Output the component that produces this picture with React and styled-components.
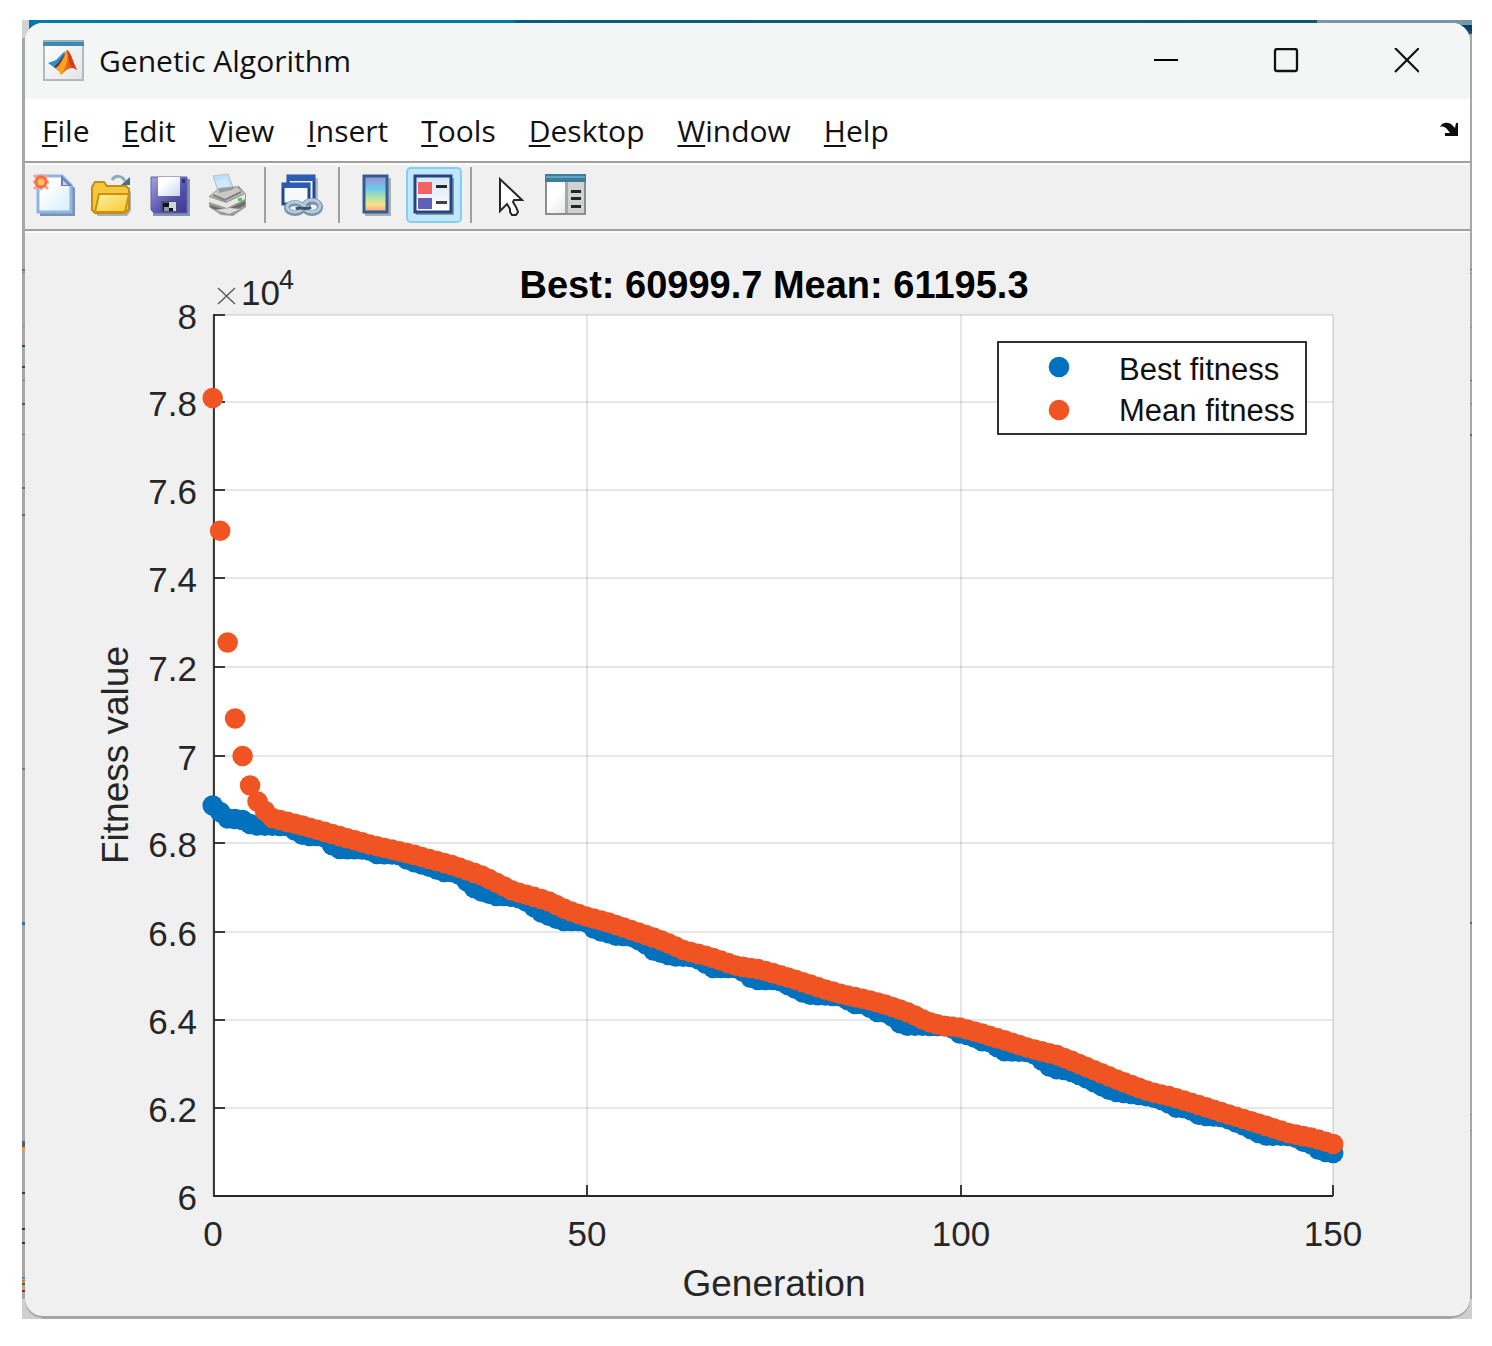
import React from 'react';
import styled, { createGlobalStyle } from 'styled-components';

const GlobalStyle = createGlobalStyle`
  * {
    box-sizing: border-box;
  }

  body {
    margin: 0;
    background-color: #ffffff;
  }
`;

// thin slices of whatever is open behind the window
const leftMarks = [
  [249, 2, '#6f7171'],
  [252, 1, '#8c8e8e'],
  [306, 1, '#8c8e8e'],
  [325, 2, '#3c4a4a'],
  [327, 1, '#7fb5b2'],
  [345, 1, '#7fb5b2'],
  [346, 2, '#3c4a4a'],
  [360, 1, '#7d7f7f'],
  [383, 2, '#555757'],
  [414, 1, '#777979'],
  [467, 2, '#666868'],
  [494, 2, '#666868'],
  [748, 2, '#777979'],
  [902, 3, '#1d78a8'],
  [1121, 3, '#3f66a0'],
  [1124, 3, '#6a5a50'],
  [1127, 4, '#e0976c'],
  [1172, 2, '#3c3c3c'],
  [1208, 2, '#2c2c60'],
  [1222, 2, '#2c2c60'],
  [1257, 2, '#5a88a8'],
  [1260, 2, '#d08020'],
  [1263, 2, '#2c6a6a'],
  [1266, 3, '#e0976c'],
  [1270, 2, '#803030'],
];

const rightMarks = [
  [249, 1, '#777979'],
  [253, 1, '#8c8e8e'],
  [307, 1, '#8c8e8e'],
  [360, 1, '#666868'],
  [383, 1, '#7d7f7f'],
  [414, 2, '#666868'],
  [522, 2, '#7fb5b2'],
  [902, 2, '#1d78a8'],
  [1094, 1, '#8c8e8e'],
  [1110, 1, '#8c8e8e'],
];

const stripe = (marks) => {
  const stops = marks.map(
    ([at, size, color]) =>
      `transparent ${at}px, ${color} ${at}px, ${color} ${at + size}px, transparent ${at + size}px`
  );
  return `linear-gradient(to bottom, ${stops.join(', ')})`;
};

const Page = styled.main`
  padding: 20px 20px 27px 22px;
  font-family: 'Open Sans', 'Noto Sans', sans-serif;
`;

const Backdrop = styled.div`
  padding: 3px 2px 3px 3px;
  background:
    ${stripe(leftMarks)} left top / 3px 100% no-repeat,
    ${stripe(rightMarks)} right top / 2px 100% no-repeat,
    linear-gradient(#d2d2d2, #d2d2d2) left top / 7px 18px no-repeat,
    linear-gradient(#78939f, #6f9db8) right top / 155px 5px no-repeat,
    linear-gradient(#0a3f6c, #0a3f6c) right top / 24px 11px no-repeat,
    linear-gradient(to right, #0077ae, #0077a6 34%, #075f80 34%, #14566e) left top / 100% 14px no-repeat,
    linear-gradient(#cfcfcf, #cfcfcf) left bottom / 20px 20px no-repeat,
    linear-gradient(#cfcfcf, #cfcfcf) right bottom / 20px 20px no-repeat,
    #a6a8a8;
`;

const Window = styled.section`
  overflow: hidden;
  border-radius: 18px;
  background-color: #f0f0f0;
  box-shadow: 0 2px 0 #a4a6a6;
`;

const TitleBar = styled.header`
  display: flex;
  align-items: center;
  height: 76px;
  padding: 0 4px 0 18px;
  background-color: #f4f6f6;
`;

const Title = styled.h1`
  flex: 1;
  margin: 0 0 0 14px;
  font-size: 30px;
  font-weight: 400;
  line-height: 40px;
  color: #111111;
`;

const WindowButton = styled.button`
  display: flex;
  align-items: center;
  justify-content: center;
  width: 120px;
  height: 74px;
  padding: 0;
  border: 0;
  background: none;
`;

const MenuBar = styled.nav`
  display: flex;
  align-items: center;
  height: 62px;
  padding: 2px 10px 0 17px;
  background-color: #ffffff;
`;

const MenuList = styled.ul`
  display: flex;
  flex: 1;
  gap: 33px;
  margin: 0;
  padding: 0;
  list-style: none;
`;

const MenuButton = styled.button`
  padding: 0;
  border: 0;
  background: none;
  font-family: inherit;
  font-size: 30px;
  line-height: 40px;
  color: #111111;

  &::first-letter {
    text-decoration: underline;
    text-decoration-thickness: 2px;
    text-underline-offset: 3px;
  }
`;

const DockButton = styled.button`
  display: flex;
  padding: 0 0 4px;
  border: 0;
  background: none;
`;

const ToolBar = styled.div`
  display: flex;
  align-items: center;
  gap: 2px;
  height: 70px;
  padding: 0 1px 2px;
  border-top: 2px solid #a0a0a0;
  border-bottom: 2px solid #a0a0a0;
  box-shadow: inset 0 2px 0 #fbfbfb;
`;

const ToolButton = styled.button`
  display: flex;
  align-items: center;
  justify-content: center;
  width: 56px;
  height: 56px;
  padding: 0;
  border: 2px solid ${(props) => (props.$active ? '#84cdf3' : 'transparent')};
  border-radius: 5px;
  background-color: ${(props) => (props.$active ? '#c2e6fa' : 'transparent')};
`;

const Separator = styled.span`
  width: 14px;
  height: 56px;
  background: linear-gradient(#a0a0a0, #a0a0a0) center / 2px 100% no-repeat;
`;

const Figure = styled.div`
  border-top: 2px solid #fbfbfb;
`;

const Chart = styled.svg`
  display: block;
  width: 100%;
  height: auto;
  font-family: 'Liberation Sans', Arial, sans-serif;
  fill: #262626;
`;

const TickText = styled.text`
  font-size: 35px;
`;

const ExponentText = styled.text`
  font-size: 27px;
`;

const LabelText = styled.text`
  font-size: 37px;
`;

const ChartTitle = styled.text`
  font-size: 38px;
  font-weight: 700;
  fill: #000000;
`;

const LegendText = styled.text`
  font-size: 31px;
  fill: #111111;
`;

const BLUE = '#0072bd';
const ORANGE = '#f05423';

const menus = ['File', 'Edit', 'View', 'Insert', 'Tools', 'Desktop', 'Window', 'Help'];

const xTicks = [
  { label: '0', x: 213 },
  { label: '50', x: 587 },
  { label: '100', x: 961 },
  { label: '150', x: 1333 },
];

const yTicks = [
  { label: '8', y: 315 },
  { label: '7.8', y: 402 },
  { label: '7.6', y: 490 },
  { label: '7.4', y: 578 },
  { label: '7.2', y: 667 },
  { label: '7', y: 756 },
  { label: '6.8', y: 843 },
  { label: '6.6', y: 932 },
  { label: '6.4', y: 1020 },
  { label: '6.2', y: 1108 },
  { label: '6', y: 1196 },
];

// [generation, y on the canvas], the generations between are interpolated
const meanKnots = [
  [0, 398], [1, 530.7], [2, 642.5], [3, 718.5], [4, 756], [5, 785.5], [6, 801.5],
  [7, 811], [8, 818], [9, 820], [11.7, 825], [16, 834], [21, 844.5], [26.8, 854.5],
  [32.2, 865.5], [36.2, 876], [40.2, 891], [44.7, 900.5], [47.4, 910], [50, 916.5],
  [53.2, 923], [57.2, 933], [60.3, 941], [63, 950], [66.6, 957], [70.2, 966],
  [73.3, 969.5], [77.7, 979], [82.2, 990], [84.4, 994.5], [87.5, 999.5], [90.2, 1005],
  [93.3, 1013], [95.6, 1021.5], [97.8, 1026], [100, 1027.5], [102.7, 1033],
  [106.3, 1041], [109.4, 1048.5], [113, 1055], [115.2, 1061.5], [117.9, 1070],
  [121.5, 1081], [125.5, 1092], [128.2, 1096.5], [132.2, 1105.5], [135.8, 1114],
  [139.8, 1123], [144.2, 1133.5], [147.3, 1138], [150, 1144],
];

const bestKnots = [
  [0, 805.5], [1, 812], [2, 818.5], [3, 819], [4, 820], [5, 824], [6, 825.5],
  [10, 826], [12.3, 836], [14.8, 836], [16.5, 849], [20.6, 849.5], [22, 854],
  [24.8, 854.5], [26.4, 861], [28.7, 866], [30.9, 872], [32.6, 872], [35.3, 890],
  [38, 896], [39.5, 896], [41.5, 899], [44.1, 913], [46.8, 921], [49.8, 921],
  [51.5, 931.5], [52.7, 931.5], [53.4, 935.7], [55.8, 936], [57.6, 942], [59, 950.5],
  [61.7, 956.5], [64.3, 957], [65.7, 961.5], [66.6, 968], [70.4, 968], [72.4, 980],
  [75.7, 980], [77.3, 986], [79.5, 994.5], [84.4, 996.5], [85.7, 1004], [87.6, 1004],
  [88.4, 1011.5], [90.4, 1013], [92.4, 1025.7], [98.7, 1026], [99.6, 1033],
  [101.8, 1036], [102.4, 1041], [104.3, 1042], [105.6, 1051], [109.6, 1052],
  [112.4, 1069], [114.3, 1070], [116.5, 1076.5], [118.7, 1085], [120.5, 1091.5],
  [125.4, 1096.5], [127.7, 1101.5], [128.6, 1107.5], [130.4, 1108], [132.2, 1115.5],
  [135.3, 1117], [138, 1125.5], [140.7, 1135.5], [144.7, 1136], [145.6, 1141.5],
  [146.7, 1142], [147.8, 1149], [149, 1152], [150, 1153],
];

const sample = (knots) => {
  const points = [];
  let k = 0;
  for (let generation = 0; generation <= 150; generation++) {
    while (knots[k + 1][0] < generation) k++;
    const [g0, y0] = knots[k];
    const [g1, y1] = knots[k + 1];
    points.push({
      x: 212.7 + generation * 7.47,
      y: y0 + ((y1 - y0) * (generation - g0)) / (g1 - g0),
    });
  }
  return points;
};

const series = [
  { name: 'Best fitness', color: BLUE, points: sample(bestKnots), legendY: 367, textY: 380 },
  { name: 'Mean fitness', color: ORANGE, points: sample(meanKnots), legendY: 410, textY: 421 },
];

const MatlabIcon = () => (
  <svg width="42" height="42" viewBox="0 0 42 42" aria-hidden="true">
    <defs>
      <linearGradient id="matlabPaper" x1="0" y1="0" x2="1" y2="1">
        <stop offset="0" stopColor="#ffffff" />
        <stop offset="1" stopColor="#e2e4e6" />
      </linearGradient>
      <linearGradient id="matlabFlame" x1="0" y1="0" x2="1" y2="0">
        <stop offset="0" stopColor="#f8b020" />
        <stop offset="0.4" stopColor="#f07818" />
        <stop offset="1" stopColor="#d83a1c" />
      </linearGradient>
    </defs>
    <rect x="1" y="1" width="39" height="39" fill="url(#matlabPaper)" stroke="#b4b8bc" strokeWidth="2" />
    <rect x="0" y="0" width="41" height="6" fill="#4088ae" />
    <rect x="0" y="0" width="41" height="2" fill="#8fb4c8" />
    <path d="M5 23 L13 20 L18 15 L22 11 L18 25 L12 28 Z" fill="#2f8fc4" />
    <path d="M11 27 L16 22 L24 10 L21 27 L16 31 Z" fill="#5a2a3c" />
    <path d="M12 28 C16 27 20 18 24 10 C28 12 30 22 34 30 C29 26 25 28 18 35 C16 31 15 29 12 28 Z" fill="url(#matlabFlame)" />
    <path d="M24 10 C26 16 24 26 18 35 C17 32 16 30 14 28 C19 25 21 17 24 10 Z" fill="#f8a420" />
    <path d="M24 10 C28 13 30 23 34 30 L28 26 C26 22 25 16 24 10 Z" fill="#d03c1c" />
  </svg>
);

const NewIcon = () => (
  <svg width="44" height="44" viewBox="0 0 44 44" aria-hidden="true">
    <defs>
      <linearGradient id="newPaper" x1="0" y1="0" x2="1" y2="1">
        <stop offset="0.3" stopColor="#ffffff" />
        <stop offset="1" stopColor="#d2ecfb" />
      </linearGradient>
    </defs>
    <path d="M8 6 H33 L43 15 V43 H8 Z" fill="#8090b0" />
    <path d="M6 3 H30 L39 12 V39 H6 Z" fill="url(#newPaper)" stroke="#8fb4e6" strokeWidth="3" />
    <path d="M29 2 L40 13 H29 Z" fill="#6a80bc" />
    <path d="M31 7 L36 12 H31 Z" fill="#c4d0ec" />
    <g stroke="#f8a48e" strokeWidth="3">
      <path d="M9 1 V17 M1 9 H17 M2 2 L16 16 M16 2 L2 16" />
    </g>
    <circle cx="9" cy="9" r="5" fill="#ffc060" stroke="#fa6c48" strokeWidth="3" />
  </svg>
);

const OpenIcon = () => (
  <svg width="44" height="44" viewBox="0 0 44 44" aria-hidden="true">
    <defs>
      <linearGradient id="folderFront" x1="0" y1="0" x2="1" y2="1">
        <stop offset="0" stopColor="#fff3a0" />
        <stop offset="1" stopColor="#f8c832" />
      </linearGradient>
    </defs>
    <path d="M5 40 L8 43 H37 L41 38 V18 Z" fill="#a8b4bc" />
    <path d="M2 14 L5 9 H14 L17 13 H36 L39 16 V36 L35 40 H5 L2 37 Z" fill="#f4c83c" stroke="#c88a14" strokeWidth="2" />
    <path d="M9 21 H39 L35 39 H5 Z" fill="url(#folderFront)" stroke="#d0900f" strokeWidth="2" />
    <path d="M22 7 C25 2 32 2 35 8" fill="none" stroke="#8fa8ba" strokeWidth="3" />
    <path d="M31 12 H40 V4 Z" fill="#436f92" />
  </svg>
);

const SaveIcon = () => (
  <svg width="42" height="42" viewBox="0 0 42 42" aria-hidden="true">
    <defs>
      <linearGradient id="diskBody" x1="0" y1="0" x2="1" y2="1">
        <stop offset="0" stopColor="#a4a2dc" />
        <stop offset="0.6" stopColor="#5552ac" />
        <stop offset="1" stopColor="#3c3890" />
      </linearGradient>
      <linearGradient id="diskLabel" x1="0" y1="0" x2="1" y2="1">
        <stop offset="0.3" stopColor="#ffffff" />
        <stop offset="1" stopColor="#c8d8ee" />
      </linearGradient>
    </defs>
    <path d="M4 5 H41 V42 H4 Z" fill="#8494ac" />
    <path d="M2 3 H38 V39 H5 L2 36 Z" fill="url(#diskBody)" stroke="#6360b4" strokeWidth="1" />
    <rect x="9" y="3" width="22" height="19" fill="url(#diskLabel)" />
    <rect x="33" y="5" width="3" height="4" fill="#302c7c" />
    <rect x="12" y="27" width="16" height="11" fill="#4a4f70" />
    <rect x="20" y="28" width="7" height="9" fill="#cfd6da" />
    <path d="M14 29 H20 V34 H24 V37 H14 Z" fill="#101418" />
    <rect x="15" y="33" width="5" height="4" fill="#8a9aa4" />
  </svg>
);

const PrintIcon = () => (
  <svg width="42" height="44" viewBox="0 0 42 44" aria-hidden="true">
    <path d="M6 3 L21 1 L27 17 L12 21 Z" fill="#c0e0fa" stroke="#b4c0cc" strokeWidth="1" />
    <path d="M9 8 L20 5 L24 16 L13 19 Z" fill="#d0e8fc" />
    <path d="M2 23 L12 15 L32 13 L39 21 V34 L26 43 L14 42 L2 34 Z" fill="#9a9a98" />
    <path d="M3 23 L12 16 L12 20 L25 17 L29 14 L37 20 L20 28 Z" fill="#c8c8c6" />
    <path d="M2 24 L19 30 L38 21 V26 L20 35 L2 29 Z" fill="#e6e6e4" />
    <path d="M3 32 L19 37 L38 28 V32 L21 41 L4 35 Z" fill="#6e6e6c" />
    <path d="M8 37 L22 41 L33 36 L23 35 Z" fill="#dcdcda" />
    <path d="M6 22 L18 27 L34 19" fill="none" stroke="#808080" strokeWidth="2" />
    <rect x="31" y="25" width="4" height="3" fill="#58c258" />
  </svg>
);

const LinkIcon = () => (
  <svg width="44" height="44" viewBox="0 0 44 44" aria-hidden="true">
    <path d="M8 5 H38 V32 H30 Z" fill="#b4bac0" />
    <rect x="8" y="3" width="26" height="25" fill="#e8f2fb" stroke="#234a8c" strokeWidth="3" />
    <rect x="7" y="2" width="28" height="6" fill="#2a5cb0" />
    <rect x="3" y="11" width="26" height="20" fill="#f6fafe" stroke="#234a8c" strokeWidth="3" />
    <rect x="2" y="10" width="28" height="5" fill="#2a5cb0" />
    <g fill="none">
      <ellipse cx="15" cy="35" rx="8" ry="5" stroke="#7b94aa" strokeWidth="6" />
      <ellipse cx="32" cy="34" rx="8" ry="6" stroke="#7b94aa" strokeWidth="6" />
      <ellipse cx="15" cy="34" rx="8" ry="5" stroke="#b4cade" strokeWidth="3" />
      <ellipse cx="32" cy="33" rx="8" ry="6" stroke="#b4cade" strokeWidth="3" />
      <path d="M16 36 C20 33 26 38 31 34" stroke="#355770" strokeWidth="3" />
    </g>
  </svg>
);

const ColorbarIcon = () => (
  <svg width="32" height="44" viewBox="0 0 32 44" aria-hidden="true">
    <defs>
      <linearGradient id="colorbar" x1="0" y1="0" x2="0" y2="1">
        <stop offset="0" stopColor="#a090d4" />
        <stop offset="0.35" stopColor="#6cc8ec" />
        <stop offset="0.6" stopColor="#b4e4a4" />
        <stop offset="0.8" stopColor="#fbe08c" />
        <stop offset="1" stopColor="#f89c84" />
      </linearGradient>
    </defs>
    <rect x="5" y="5" width="26" height="38" fill="#a8afb6" />
    <rect x="4" y="3" width="23" height="36" fill="url(#colorbar)" stroke="#345c90" strokeWidth="3" />
  </svg>
);

const LegendIcon = () => (
  <svg width="42" height="44" viewBox="0 0 42 44" aria-hidden="true">
    <defs>
      <linearGradient id="legendPaper" x1="0" y1="0" x2="0" y2="1">
        <stop offset="0" stopColor="#d8e4f4" />
        <stop offset="1" stopColor="#ffffff" />
      </linearGradient>
    </defs>
    <rect x="3" y="5" width="38" height="37" fill="#8497aa" />
    <rect x="2" y="3" width="36" height="36" fill="url(#legendPaper)" stroke="#234880" strokeWidth="3" />
    <rect x="5" y="9" width="14" height="12" fill="#f26464" />
    <rect x="5" y="25" width="14" height="11" fill="#6260b4" />
    <rect x="23" y="12" width="11" height="3" fill="#262626" />
    <rect x="23" y="28" width="11" height="3" fill="#404040" />
  </svg>
);

const PointerIcon = () => (
  <svg width="32" height="44" viewBox="0 0 32 44" aria-hidden="true">
    <path
      d="M8 6 V38 L15 31 L18 36 V39 L20 42 H24 L26 39 L24 34 L21 29 L22 27 H30 Z"
      fill="#ffffff"
      stroke="#262626"
      strokeWidth="2"
    />
  </svg>
);

const InspectorIcon = () => (
  <svg width="42" height="42" viewBox="0 0 42 42" aria-hidden="true">
    <defs>
      <linearGradient id="inspectorPaper" x1="0" y1="0" x2="1" y2="1">
        <stop offset="0.4" stopColor="#ffffff" />
        <stop offset="1" stopColor="#d4d4d4" />
      </linearGradient>
    </defs>
    <rect x="1" y="1" width="39" height="39" fill="url(#inspectorPaper)" stroke="#8a8e90" strokeWidth="2" />
    <rect x="23" y="8" width="16" height="31" fill="#d0d2d2" />
    <rect x="20" y="8" width="3" height="31" fill="#a4a8a8" />
    <rect x="0" y="0" width="41" height="8" fill="#3c7c9c" />
    <rect x="1" y="2" width="39" height="2" fill="#60a4c0" />
    <g fill="#262626">
      <rect x="26" y="16" width="10" height="3" />
      <rect x="26" y="23" width="10" height="3" />
      <rect x="26" y="31" width="10" height="3" />
    </g>
  </svg>
);

const FitnessChart = () => (
  <Chart viewBox="25 233 1445 1083" role="img" aria-label="Fitness value by generation">
    <rect x="214" y="315" width="1119" height="881" fill="#ffffff" />
    <g stroke="#262626" strokeOpacity="0.15" strokeWidth="1.6">
      {yTicks.map((tick) => (
        <line key={tick.label} x1="214" y1={tick.y} x2="1333" y2={tick.y} />
      ))}
      {xTicks.map((tick) => (
        <line key={tick.label} x1={tick.x} y1="315" x2={tick.x} y2="1196" />
      ))}
    </g>
    <g stroke="#262626" strokeWidth="1.8">
      <path d="M214 314 V1196 H1333" fill="none" />
      {yTicks.map((tick) => (
        <line key={tick.label} x1="214" y1={tick.y} x2="225" y2={tick.y} />
      ))}
      {xTicks.slice(1).map((tick) => (
        <line key={tick.label} x1={tick.x} y1="1185" x2={tick.x} y2="1196" />
      ))}
    </g>

    {yTicks.map((tick) => (
      <TickText key={tick.label} x="197" y={tick.y + 14} textAnchor="end">
        {tick.label}
      </TickText>
    ))}
    {xTicks.map((tick) => (
      <TickText key={tick.label} x={tick.x} y="1246" textAnchor="middle">
        {tick.label}
      </TickText>
    ))}

    <path d="M218 288 L235 304 M235 288 L218 304" stroke="#555555" strokeWidth="1.3" />
    <TickText x="241" y="305">10</TickText>
    <ExponentText x="279" y="289">4</ExponentText>

    <ChartTitle x="774" y="298" textAnchor="middle">Best: 60999.7 Mean: 61195.3</ChartTitle>
    <LabelText x="774" y="1296" textAnchor="middle">Generation</LabelText>
    <LabelText x="0" y="0" textAnchor="middle" transform="translate(128 755) rotate(-90)">
      Fitness value
    </LabelText>

    {series.map((item) => (
      <g key={item.name} fill={item.color}>
        {item.points.map((point) => (
          <circle key={point.x} cx={point.x} cy={point.y} r="10.3" />
        ))}
      </g>
    ))}

    <rect x="998" y="342" width="308" height="92" fill="#ffffff" stroke="#1c1c1c" strokeWidth="1.8" />
    {series.map((item) => (
      <g key={item.name}>
        <circle cx="1059" cy={item.legendY} r="10.3" fill={item.color} />
        <LegendText x="1119" y={item.textY}>{item.name}</LegendText>
      </g>
    ))}
  </Chart>
);

const App = () => {
  return (
    <Page>
      <GlobalStyle />
      <Backdrop>
        <Window>
          <TitleBar>
            <MatlabIcon />
            <Title>Genetic Algorithm</Title>
            <WindowButton aria-label="Minimize">
              <svg width="26" height="26" viewBox="0 0 26 26">
                <path d="M1 12 H25" stroke="#000000" strokeWidth="2" />
              </svg>
            </WindowButton>
            <WindowButton aria-label="Maximize">
              <svg width="26" height="26" viewBox="0 0 26 26">
                <rect x="2" y="1" width="22" height="22" rx="2" fill="none" stroke="#111111" strokeWidth="2.3" />
              </svg>
            </WindowButton>
            <WindowButton aria-label="Close">
              <svg width="26" height="26" viewBox="0 0 26 26">
                <path d="M2 0 L26 24 M26 0 L2 24" stroke="#111111" strokeWidth="2.2" />
              </svg>
            </WindowButton>
          </TitleBar>

          <MenuBar>
            <MenuList>
              {menus.map((menu) => (
                <li key={menu}>
                  <MenuButton>{menu}</MenuButton>
                </li>
              ))}
            </MenuList>
            <DockButton aria-label="Dock figure">
              <svg width="21" height="16" viewBox="0 0 21 16">
                <path d="M1 6 C3 1 8 1 12 3 L16 7 L17 2 H19 V15 H6 V12 H11 L8 8 C6 6 4 5 1 6 Z" fill="#0c0c0c" />
              </svg>
            </DockButton>
          </MenuBar>

          <ToolBar role="toolbar">
            <ToolButton aria-label="New Figure"><NewIcon /></ToolButton>
            <ToolButton aria-label="Open File"><OpenIcon /></ToolButton>
            <ToolButton aria-label="Save Figure"><SaveIcon /></ToolButton>
            <ToolButton aria-label="Print Figure"><PrintIcon /></ToolButton>
            <Separator />
            <ToolButton aria-label="Link Plot"><LinkIcon /></ToolButton>
            <Separator />
            <ToolButton aria-label="Insert Colorbar"><ColorbarIcon /></ToolButton>
            <ToolButton aria-label="Insert Legend" $active><LegendIcon /></ToolButton>
            <Separator />
            <ToolButton aria-label="Edit Plot"><PointerIcon /></ToolButton>
            <ToolButton aria-label="Open Property Inspector"><InspectorIcon /></ToolButton>
          </ToolBar>

          <Figure>
            <FitnessChart />
          </Figure>
        </Window>
      </Backdrop>
    </Page>
  );
};

export default App;
